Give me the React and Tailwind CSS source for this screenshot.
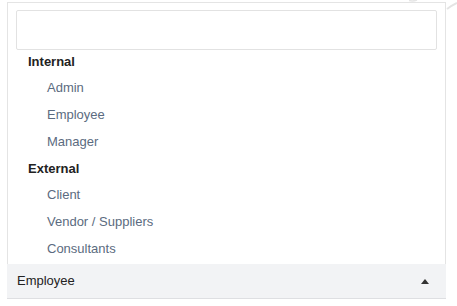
import { useState } from 'react';

const groups = [
  { label: 'Internal', items: ['Admin', 'Employee', 'Manager'] },
  { label: 'External', items: ['Client', 'Vendor / Suppliers', 'Consultants'] },
];

const App = () => {
  const [query, setQuery] = useState('');
  const [selected] = useState('Employee');

  return (
    <div className="relative w-[457px] h-[306px] bg-white overflow-hidden font-['Liberation_Sans',Arial,sans-serif] text-[13px]">
      {/* faint backdrop stroke in the corner */}
      <svg className="absolute top-0 right-0" width="60" height="14" viewBox="0 0 60 14">
        <path d="M12 0.5 Q16 1.5 20 0" stroke="#e6e6e6" strokeWidth="1.5" fill="none" />
        <path d="M50 9 Q54 6 60 3" stroke="#e4e4e4" strokeWidth="2" fill="none" />
      </svg>

      <div className="ml-[7px] mt-[2px] w-[439px]">
        {/* Dropdown panel */}
        <div className="border border-b-0 border-[#e4e4e4] bg-white pt-[7px] pb-[2px] px-[8px]">
          <input
            value={query}
            onChange={(e) => setQuery(e.target.value)}
            className="block w-full h-[40px] border border-[#e2e2e2] rounded-[2px] outline-none px-2"
          />
          <ul className="-mt-[2px]">
            {groups.map((group) => (
              <li key={group.label}>
                <div className="h-[26.75px] flex items-center pl-[12px] font-bold text-[#222]">
                  {group.label}
                </div>
                <ul>
                  {group.items.map((item) => (
                    <li
                      key={item}
                      className="h-[26.75px] flex items-center pl-[31px] text-[#5b6b80]"
                    >
                      {item}
                    </li>
                  ))}
                </ul>
              </li>
            ))}
          </ul>
        </div>

        {/* Select control */}
        <div className="h-[35px] flex items-center justify-between bg-[#f2f3f5] border-b border-[#dedfe2] pl-[10px] pr-[17px] text-[#222]">
          <span>{selected}</span>
          <svg width="8" height="5" viewBox="0 0 8 5">
            <path d="M4 0 L8 5 L0 5 Z" fill="#333" />
          </svg>
        </div>
      </div>
    </div>
  );
};

export default App;
